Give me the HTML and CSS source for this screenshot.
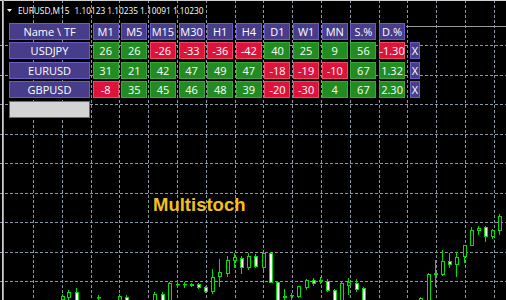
FILE: index.html
```html
<!DOCTYPE html>
<html lang="en">
<head>
    <meta charset="UTF-8">
    <title>Multistoch</title>
    <link rel="stylesheet" href="styles.css">
</head>
<body>
    <div class="chart">
        <!-- chart canvas: grid, frame and candles -->
        <svg class="canvas" id="canvas" width="506" height="300" viewBox="0 0 506 300"></svg>

        <div class="title">
            <svg class="tri" width="5" height="3" viewBox="0 0 5 3"><polygon points="0,0 5,0 2.5,3" fill="#fff"/></svg>
            <span>EURUSD,M15</span>
            <span class="prices">1.10123 1.10235 1.10091 1.10230</span>
        </div>

        <div class="board">
            <div class="cell name">Name \ TF</div>
            <div class="cell head">M1</div>
            <div class="cell head">M5</div>
            <div class="cell head">M15</div>
            <div class="cell head">M30</div>
            <div class="cell head">H1</div>
            <div class="cell head">H4</div>
            <div class="cell head">D1</div>
            <div class="cell head">W1</div>
            <div class="cell head">MN</div>
            <div class="cell head">S.%</div>
            <div class="cell head">D.%</div>
            <div class="gap"></div>

            <div class="cell name">USDJPY</div>
            <div class="cell up">26</div>
            <div class="cell up">26</div>
            <div class="cell down">-26</div>
            <div class="cell down">-33</div>
            <div class="cell down">-36</div>
            <div class="cell down">-42</div>
            <div class="cell up">40</div>
            <div class="cell up">25</div>
            <div class="cell up">9</div>
            <div class="cell up">56</div>
            <div class="cell down">-1.30</div>
            <div class="cell close">X</div>

            <div class="cell name">EURUSD</div>
            <div class="cell up">31</div>
            <div class="cell up">21</div>
            <div class="cell up">42</div>
            <div class="cell up">47</div>
            <div class="cell up">49</div>
            <div class="cell up">47</div>
            <div class="cell down">-18</div>
            <div class="cell down">-19</div>
            <div class="cell down">-10</div>
            <div class="cell up">67</div>
            <div class="cell up">1.32</div>
            <div class="cell close">X</div>

            <div class="cell name">GBPUSD</div>
            <div class="cell down">-8</div>
            <div class="cell up">35</div>
            <div class="cell up">45</div>
            <div class="cell up">46</div>
            <div class="cell up">48</div>
            <div class="cell up">39</div>
            <div class="cell down">-20</div>
            <div class="cell down">-30</div>
            <div class="cell up">4</div>
            <div class="cell up">67</div>
            <div class="cell up">2.30</div>
            <div class="cell close">X</div>

            <div class="cell blank"></div>
        </div>

        <div class="label">Multistoch</div>
    </div>

    <script>
        const ns = 'http://www.w3.org/2000/svg';
        const canvas = document.getElementById('canvas');

        function add(tag, attrs) {
            const el = document.createElementNS(ns, tag);
            for (const k in attrs) el.setAttribute(k, attrs[k]);
            canvas.appendChild(el);
        }

        // dashed grid
        for (let k = 0; k < 17; k++) {
            const x = Math.round(33 + 28.8 * k) + 0.5;
            add('line', { x1: x, y1: 0, x2: x, y2: 300, class: 'grid' });
        }
        for (let k = 0; k < 9; k++) {
            const y = Math.round(45 + 29.5 * k) + 0.5;
            add('line', { x1: 0, y1: y, x2: 506, y2: y, class: 'grid' });
        }

        // frame and price line
        add('line', { x1: 0, y1: 0.5, x2: 506, y2: 0.5, class: 'frame' });
        add('line', { x1: 2.5, y1: 0, x2: 2.5, y2: 300, class: 'frame' });
        add('line', { x1: 3.5, y1: 0, x2: 3.5, y2: 300, class: 'frame-dark' });
        add('line', { x1: 406, y1: 26.5, x2: 506, y2: 26.5, class: 'frame-dark' });

        // candles: left, high, body top, body bottom, low, bull
        const candles = [
            [61, 294, 296, 300, 301, 0], [67, 290, 292, 298, 301, 0], [75, 288, 292, 301, 301, 1],
            [97, 295, 297, 298, 301, 0], [118, 294, 296, 301, 301, 0], [125, 295, 297, 301, 301, 1],
            [153, 292, 294, 301, 301, 0], [161, 292, 294, 301, 301, 1], [168, 282, 283, 301, 301, 0],
            [176, 282, 284, 285, 288, 0], [183, 282, 284, 285, 288, 0], [190, 283, 284, 286, 287, 0],
            [197, 283, 284, 288, 289, 1], [204, 286, 287, 292, 293, 1], [211, 269, 277, 292, 294, 0],
            [218, 259, 272, 277, 287, 0], [226, 256, 260, 274, 277, 0], [233, 253, 257, 261, 268, 0],
            [240, 256, 258, 268, 274, 1], [247, 253, 256, 268, 270, 0], [254, 254, 256, 267, 268, 1],
            [262, 252, 253, 268, 270, 0], [269, 252, 253, 283, 283, 1], [276, 281, 282, 301, 301, 1],
            [283, 289, 296, 298, 301, 0], [290, 293, 295, 296, 301, 0], [297, 286, 286, 297, 298, 0],
            [305, 279, 280, 288, 290, 0], [312, 278, 280, 284, 286, 1], [319, 277, 280, 282, 284, 0],
            [326, 279, 281, 291, 292, 1], [333, 289, 290, 301, 301, 1], [340, 282, 283, 301, 301, 0],
            [347, 278, 282, 286, 295, 0], [355, 279, 283, 290, 292, 1], [362, 287, 288, 301, 301, 1],
            [419, 297, 298, 301, 301, 0], [427, 273, 274, 301, 301, 0], [434, 260, 273, 275, 287, 0],
            [441, 250, 261, 275, 276, 0], [448, 253, 261, 265, 268, 1], [455, 252, 257, 265, 277, 0],
            [463, 245, 245, 257, 263, 0], [470, 227, 230, 246, 246, 0], [477, 226, 228, 231, 235, 0],
            [484, 226, 227, 237, 242, 1], [491, 229, 230, 237, 239, 0], [498, 214, 216, 231, 235, 0]
        ];
        candles.forEach(([l, hi, top, bot, lo, bull]) => {
            add('line', { x1: l + 1.5, y1: hi, x2: l + 1.5, y2: lo, class: 'wick' });
            add('rect', { x: l + 0.5, y: top + 0.5, width: 3, height: Math.max(bot - top - 1, 0.5), class: bull ? 'bull' : 'bear' });
        });
    </script>
</body>
</html>
```

FILE: styles.css
```css
body {
    margin: 0;
    background-color: #000;
}
.chart {
    position: relative;
    width: 506px;
    height: 300px;
    overflow: hidden;
    background-color: #000;
    font-family: "Open Sans", sans-serif;
    color: #fff;
}
.canvas {
    position: absolute;
    left: 0;
    top: 0;
}
.grid {
    stroke: #8a96a3;
    stroke-width: 1;
    stroke-dasharray: 3 2;
}
.frame {
    stroke: #d0d0d0;
}
.frame-dark {
    stroke: #9a9a9a;
}
.wick {
    stroke: #00e000;
    stroke-width: 1;
}
.bull {
    fill: #fff;
    stroke: #00e000;
}
.bear {
    fill: #000;
    stroke: #00e000;
}
.title {
    position: relative;
    display: flex;
    align-items: center;
    height: 11px;
    padding: 5px 0 0 7px;
    font-size: 8.3px;
    line-height: 11px;
    white-space: nowrap;
}
.tri {
    margin-right: 6px;
}
.prices {
    margin-left: 5px;
}
.board {
    position: relative;
    display: grid;
    grid-template-columns: 81px repeat(11, 26px) 12px;
    grid-auto-rows: 17px;
    column-gap: 2.65px;
    row-gap: 2.6px;
    width: max-content;
    margin: 6.6px 0 0 9px;
    font-size: 11px;
    line-height: 15px;
}
.cell {
    display: flex;
    justify-content: center;
    box-sizing: border-box;
    border: 1px solid;
    white-space: nowrap;
}
.name,
.head,
.close {
    background-color: #483d8b;
    border-color: #6a5cc0;
}
.up {
    background-color: #228b22;
    border-color: #3aa83a;
}
.down {
    background-color: #dc143c;
    border-color: #ee4a68;
}
.close {
    margin-left: 2.65px;
}
.blank {
    background-color: #d3d3d3;
    border-color: #6a5cc0;
}
.label {
    position: absolute;
    left: 153px;
    top: 195.5px;
    font-family: "Liberation Sans", Arial, sans-serif;
    font-weight: bold;
    font-size: 18.5px;
    line-height: 1;
    color: #f2c01c;
}
```
